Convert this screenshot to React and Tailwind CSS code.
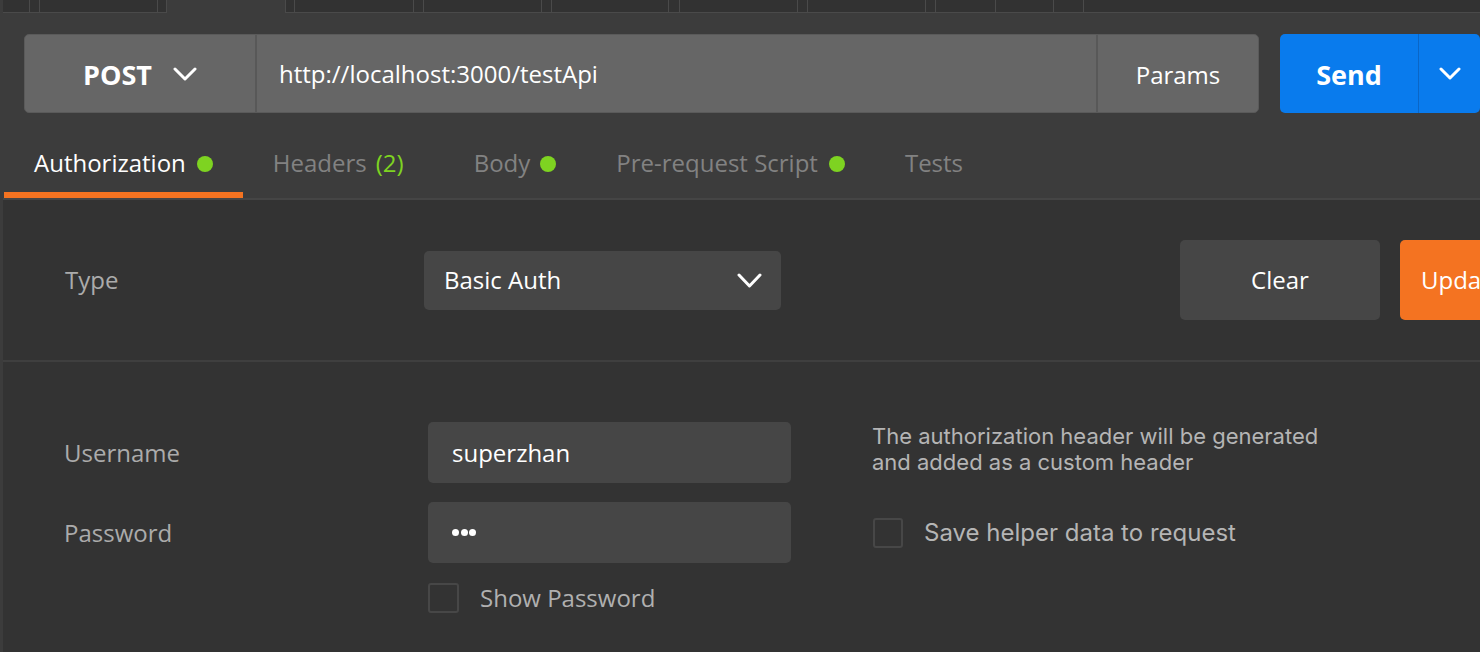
import React from "react";

const Chevron = ({ className = "", w = 24, h = 14, sw = 3 }) => (
  <svg width={w} height={h} viewBox={`0 0 ${w} ${h}`} className={className}>
    <polyline
      points={`${sw / 2 + 0.5},${sw / 2 + 0.5} ${w / 2},${h - sw / 2 - 0.5} ${w - sw / 2 - 0.5},${sw / 2 + 0.5}`}
      fill="none"
      stroke="white"
      strokeWidth={sw}
      strokeLinecap="round"
      strokeLinejoin="round"
    />
  </svg>
);

const Dot = () => <span className="inline-block w-[16px] h-[16px] rounded-full bg-[#7ed321]" />;

function TopStrip() {
  return (
    <div className="flex h-[13px] bg-[#323232]">
      <div className="w-[27px] border-r border-b border-[#4a4a4a]" />
      <div className="w-[9px] border-b border-[#4a4a4a]" />
      <div className="w-[119px] border-x border-b border-[#4a4a4a]" />
      <div className="w-[8px] border-b border-[#4a4a4a]" />
      <div className="w-[120px] border-x border-[#4a4a4a] bg-[#3c3c3c]" />
      <div className="w-[8px] border-b border-[#4a4a4a]" />
      <div className="w-[120px] border-x border-b border-[#4a4a4a]" />
      <div className="w-[9px] border-b border-[#4a4a4a]" />
      <div className="w-[119px] border-x border-b border-[#4a4a4a]" />
      <div className="w-[9px] border-b border-[#4a4a4a]" />
      <div className="w-[118px] border-x border-b border-[#4a4a4a]" />
      <div className="w-[10px] border-b border-[#4a4a4a]" />
      <div className="w-[119px] border-x border-b border-[#4a4a4a]" />
      <div className="w-[9px] border-b border-[#4a4a4a]" />
      <div className="w-[119px] border-x border-b border-[#4a4a4a]" />
      <div className="w-[9px] border-b border-[#4a4a4a]" />
      <div className="w-[61px] border-x border-b border-[#4a4a4a]" />
      <div className="w-[58px] border-r border-b border-[#4a4a4a]" />
      <div className="w-[30px] border-r border-b border-[#4a4a4a]" />
      <div className="flex-1 border-b border-[#4a4a4a]" />
    </div>
  );
}

export default function App() {
  return (
    <div className="w-[1480px] h-[652px] overflow-hidden flex bg-[#333333] font-['Open_Sans',sans-serif]">
      <div className="w-[3px] shrink-0 bg-[#3c3c3c]" />
      <div className="w-[1477px] shrink-0 flex flex-col">
        {/* Upper area */}
        <div className="bg-[#3c3c3c]">
          <TopStrip />
          <div className="flex pt-[21px] pl-[21px]">
            <div className="flex w-[1235px] h-[79px] rounded-[5px] bg-[#666666] border border-[#5a5a5a] text-white text-[24px]">
              <div className="w-[232px] shrink-0 flex items-center justify-center gap-[21px] border-r-2 border-[#585858]">
                <span className="font-bold text-[27px] pt-[3px]">POST</span>
                <Chevron w={24} h={14} sw={3} />
              </div>
              <div className="flex-1 flex items-center pl-[22px]">http://localhost:3000/testApi</div>
              <div className="w-[162px] shrink-0 flex items-center justify-center border-l-2 border-[#585858] pt-[2px]">
                Params
              </div>
            </div>
            <div className="ml-[21px] w-[200px] h-[79px] shrink-0 flex rounded-[5px] bg-[#097bed] text-white">
              <div className="w-[138px] flex items-center justify-center font-bold text-[27px] pt-[3px]">Send</div>
              <div className="flex-1 flex items-center justify-center border-l border-[#0a66c6]">
                <Chevron w={22} h={13} sw={3} />
              </div>
            </div>
          </div>
          {/* Tabs */}
          <div className="flex pl-[1px] border-b-2 border-[#454545] text-[24px] leading-[32px]">
            <div className="h-[85px] flex items-end pb-[13px] px-[30px] border-b-[6px] border-[#f47321] text-white">
              <div className="flex items-center h-[32px]">
                <span>Authorization</span>
                <span className="ml-[11px] mt-[2px] flex"><Dot /></span>
              </div>
            </div>
            <div className="h-[85px] flex items-end pb-[13px] pl-[30px] pr-[40px] border-b-[6px] border-transparent text-[#828282]">
              <div className="flex items-center h-[32px]">
                <span>Headers</span>
                <span className="ml-[9px] text-[#7ed321]">(2)</span>
              </div>
            </div>
            <div className="h-[85px] flex items-end pb-[13px] px-[30px] border-b-[6px] border-transparent text-[#828282]">
              <div className="flex items-center h-[32px]">
                <span>Body</span>
                <span className="ml-[10px] mt-[2px] flex"><Dot /></span>
              </div>
            </div>
            <div className="h-[85px] flex items-end pb-[13px] px-[30px] border-b-[6px] border-transparent text-[#828282]">
              <div className="flex items-center h-[32px]">
                <span>Pre-request Script</span>
                <span className="ml-[11px] mt-[2px] flex"><Dot /></span>
              </div>
            </div>
            <div className="h-[85px] flex items-end pb-[13px] px-[30px] border-b-[6px] border-transparent text-[#828282]">
              <div className="flex items-center h-[32px]">
                <span>Tests</span>
              </div>
            </div>
          </div>
        </div>

        {/* Body */}
        <div className="pt-[40px]">
          <div className="flex items-center h-[80px] pl-[62px] text-[24px]">
            <div className="w-[359px] shrink-0 text-[#ababab]">Type</div>
            <div className="w-[357px] h-[59px] shrink-0 rounded-[5px] bg-[#464646] flex items-center justify-between pl-[20px] pr-[19px] text-white">
              <span>Basic Auth</span>
              <Chevron w={25} h={15} sw={3} />
            </div>
            <div className="ml-[399px] w-[200px] h-[80px] shrink-0 rounded-[5px] bg-[#464646] flex items-center justify-center text-white">
              Clear
            </div>
            <div className="ml-[20px] w-[120px] h-[80px] shrink-0 rounded-[5px] bg-[#f47321] flex items-center pl-[21px] text-white whitespace-nowrap">
              Update
            </div>
          </div>
          <div className="mt-[40px] h-[2px] bg-[#3f3f3f]" />
          <div className="pt-[60px] pl-[61px] text-[24px]">
            <div className="flex h-[61px]">
              <div className="w-[364px] shrink-0 flex items-center text-[#ababab]">Username</div>
              <div className="w-[363px] shrink-0 rounded-[5px] bg-[#464646] flex items-center pl-[24px] text-white">superzhan</div>
              <div className="ml-[81px] pt-[1px] font-['Inter',sans-serif] text-[22px] leading-[26px] text-[#b5b5b5]">
                The authorization header will be generated
                <br />
                and added as a custom header
              </div>
            </div>
            <div className="flex h-[61px] mt-[19px]">
              <div className="w-[364px] shrink-0 flex items-center text-[#ababab]">Password</div>
              <div className="w-[363px] shrink-0 rounded-[5px] bg-[#464646] flex items-center pl-[24px] gap-[1.5px]">
                <span className="w-[7px] h-[7px] rounded-full bg-white" />
                <span className="w-[7px] h-[7px] rounded-full bg-white" />
                <span className="w-[7px] h-[7px] rounded-full bg-white" />
              </div>
              <div className="ml-[82px] flex items-center">
                <span className="w-[30px] h-[30px] rounded-[3px] border-2 border-[#474747]" />
                <span className="ml-[21px] font-['Inter',sans-serif] text-[24px] text-[#b5b5b5]">Save helper data to request</span>
              </div>
            </div>
            <div className="flex mt-[20px] h-[30px] items-center">
              <div className="w-[364px] shrink-0" />
              <span className="w-[31px] h-[30px] rounded-[3px] border-2 border-[#474747]" />
              <span className="ml-[21px] text-[#b0b0b0]">Show Password</span>
            </div>
          </div>
        </div>
      </div>
    </div>
  );
}
